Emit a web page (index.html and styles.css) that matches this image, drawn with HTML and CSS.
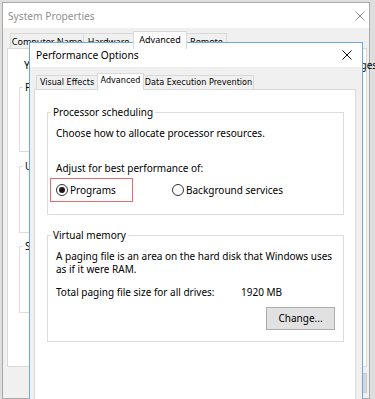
FILE: index.html
```html
<!DOCTYPE html>
<html>
<head>
<meta charset="utf-8">
<title>Performance Options</title>
<link rel="stylesheet" href="styles.css">
</head>
<body>
<div class="desktop">
  <div class="bg-win">
    <div class="bg-title">
      <span class="title">System Properties</span>
      <svg class="close" viewBox="0 0 10 10"><path d="M0.5 0.5L9.5 9.5M9.5 0.5L0.5 9.5" stroke="#8c8c8c" stroke-width="1"/></svg>
    </div>
    <div class="bg-body">
      <div class="tabs bg-tabs">
        <div class="tab w-cn">Computer Name</div>
        <div class="tab w-hw">Hardware</div>
        <div class="tab sel w-adv">Advanced</div>
        <div class="tab w-rm">Remote</div>
      </div>
      <div class="bg-panel">
        <p class="bg-note">You must be logged on as an Administrator to make most of these changes.</p>
        <div class="bg-group g1"><span class="bg-legend">Performance</span></div>
        <div class="bg-group g2"><span class="bg-legend">User Profiles</span></div>
        <div class="bg-group g3"><span class="bg-legend">Startup and Recovery</span></div>
      </div>
      <div class="bg-buttons"><div class="bg-btn">Apply</div></div>
    </div>
  </div>

  <div class="perf-win">
    <div class="perf-title">
      <span class="title">Performance Options</span>
      <svg class="close" viewBox="0 0 10 10"><path d="M0.5 0.5L9.5 9.5M9.5 0.5L0.5 9.5" stroke="#111" stroke-width="1"/></svg>
    </div>
    <div class="perf-body">
      <div class="tabs perf-tabs">
        <div class="tab w-ve">Visual Effects</div>
        <div class="tab sel w-padv">Advanced</div>
        <div class="tab w-dep">Data Execution Prevention</div>
      </div>
      <div class="perf-panel">
        <div class="group g-proc">
          <div class="legend">Processor scheduling</div>
          <div class="line l1">Choose how to allocate processor resources.</div>
          <div class="line l2">Adjust for best performance of:</div>
          <div class="radios">
            <div class="opt hl"><span class="radio on"></span><span class="opt-label">Programs</span></div>
            <div class="opt second"><span class="radio"></span><span class="opt-label">Background services</span></div>
          </div>
        </div>
        <div class="group g-vm">
          <div class="legend">Virtual memory</div>
          <div class="para">A paging file is an area on the hard disk that Windows uses<br>as if it were RAM.</div>
          <div class="total"><span>Total paging file size for all drives:</span><span>1920 MB</span></div>
          <div class="btn-row"><div class="btn">Change...</div></div>
        </div>
      </div>
    </div>
  </div>
</div>
</body>
</html>
```
FILE: styles.css
```css
* { box-sizing: border-box; }
html, body { margin: 0; padding: 0; }
body {
  width: 375px;
  height: 399px;
  overflow: hidden;
  background: #dedede;
  font-family: "Noto Sans", "Open Sans", sans-serif;
  font-size: 10px;
  color: #000;
}
.desktop {
  position: relative;
  width: 375px;
  height: 399px;
  padding: 2px 0 0 2px;
}

/* ---------- background window ---------- */
.bg-win {
  width: 368px;
  height: 397px;
  border: 1px solid #a9a9a9;
  background: #f0f0f0;
  display: flex;
  flex-direction: column;
}
.bg-title {
  height: 25px;
  background: #fff;
  display: flex;
  align-items: center;
  padding: 0 4px 0 5px;
}
.title { flex: 1; font-size: 10.2px; line-height: 16px; }
.bg-title .title { color: #8f8f8f; }
.close { width: 10px; height: 10px; flex: none; }
.bg-body {
  flex: 1;
  display: flex;
  flex-direction: column;
  padding: 3px 2px 0 4px;
}
.tabs { display: flex; align-items: flex-end; }
.tab {
  border: 1px solid #d9d9d9;
  border-bottom: none;
  background: #f0f0f0;
  text-align: center;
  white-space: nowrap;
  line-height: 13px;
}
.tab + .tab { margin-left: -1px; }
.tab.sel {
  background: #fff;
  position: relative;
  z-index: 1;
  margin-bottom: -1px;
}
.bg-tabs { height: 17px; margin-left: 3px; font-size: 9px; }
.bg-tabs .tab { height: 15px; padding-top: 1px; }
.bg-tabs .tab.sel { height: 18px; padding-top: 1px; }
.w-cn { width: 74px; }
.w-hw { width: 51px; }
.w-adv { width: 54px; }
.w-rm { width: 41px; }
.bg-panel {
  height: 319px;
  background: #fff;
  border: 1px solid #d9d9d9;
  padding: 0 10px 0 11px;
}
.bg-note { margin: 9px 0 0 5px; line-height: 14px; white-space: nowrap; }
.bg-group { border: 1px solid #dcdcdc; }
.bg-legend {
  display: block;
  width: fit-content;
  margin: -8px 0 0 3px;
  padding: 0 2px;
  background: #fff;
  line-height: 14px;
}
.g1 { margin-top: 15px; height: 65px; }
.g2 { margin-top: 14px; height: 67px; }
.g3 { margin-top: 13px; height: 67px; }
.bg-buttons { display: flex; justify-content: flex-end; margin-top: 6px; }
.bg-btn {
  width: 75px;
  height: 20px;
  background: #d6d6d6;
  border: 1px solid #cccccc;
  text-align: center;
  line-height: 18px;
  color: #6d6d6d;
}

/* ---------- performance options window ---------- */
.perf-win {
  position: absolute;
  left: 29px;
  top: 42px;
  width: 334px;
  height: 358px;
  border: 1px solid #6ea8e2;
  border-bottom: none;
  background: #f0f0f0;
  display: flex;
  flex-direction: column;
}
.perf-title {
  height: 24px;
  background: #fff;
  display: flex;
  align-items: center;
  padding: 0 10px 0 6px;
}
.perf-body {
  flex: 1;
  display: flex;
  flex-direction: column;
  padding: 6px 6px 0 4px;
}
.perf-tabs {
  height: 16px;
  margin-left: 2px;
  font-family: "DejaVu Sans Condensed", "DejaVu Sans", sans-serif;
  font-stretch: condensed;
  font-size: 9px;
}
.perf-tabs .tab { height: 14px; }
.perf-tabs .tab.sel { height: 17px; }
.w-ve { width: 62px; }
.w-padv { width: 47px; }
.w-dep { width: 111px; }
.perf-panel {
  flex: 1;
  background: #fff;
  border: 1px solid #d9d9d9;
  border-bottom: none;
  padding: 22px 11px 0 12px;
}
.group {
  border: 1px solid #dcdcdc;
  padding: 0 8px 12px 8px;
}
.legend {
  width: fit-content;
  margin: -9px 0 0 -5px;
  padding: 0 2px;
  background: #fff;
  line-height: 16px;
}
.line { line-height: 14px; white-space: nowrap; }
.l1 { margin-top: 6px; }
.l2 { margin-top: 21px; }
.radios { display: flex; align-items: center; margin-top: 3px; height: 24px; }
.opt { display: flex; align-items: center; white-space: nowrap; }
.opt.hl {
  width: 83px;
  height: 24px;
  margin-left: -6px;
  padding-left: 5px;
  border: 1px solid #e66b6b;
}
.opt.second { margin-left: 39px; }
.radio {
  width: 12px;
  height: 12px;
  border: 1px solid #333;
  border-radius: 50%;
  background: #fff;
  display: flex;
  align-items: center;
  justify-content: center;
  flex: none;
}
.radio.on::after {
  content: "";
  width: 6px;
  height: 6px;
  border-radius: 50%;
  background: #1a1a1a;
}
.opt-label { margin-left: 2px; line-height: 14px; }
.g-vm { margin-top: 20px; padding-bottom: 11px; }
.para { margin-top: 7px; line-height: 13px; white-space: nowrap; }
.total {
  margin-top: 9px;
  line-height: 14px;
  display: grid;
  grid-template-columns: 185px auto;
  white-space: nowrap;
}
.btn-row { display: flex; justify-content: flex-end; margin-top: 8px; }
.btn {
  width: 69px;
  height: 23px;
  background: #e1e1e1;
  border: 1px solid #adadad;
  text-align: center;
  line-height: 21px;
}
```
